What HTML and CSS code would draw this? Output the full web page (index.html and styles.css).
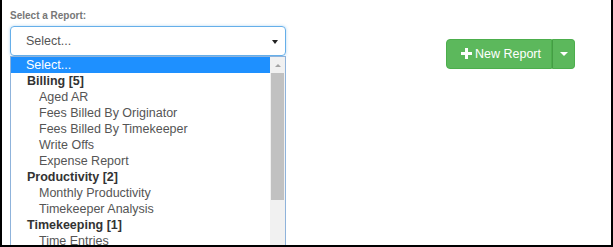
FILE: index.html
```html
<!DOCTYPE html>
<html lang="en">
<head>
    <meta charset="UTF-8">
    <title>Reports</title>
    <link rel="stylesheet" href="styles.css">
</head>
<body>
    <div class="page">
        <div class="form-group">
            <label class="label">Select a Report:</label>
            <div class="picker">
                <div class="select">Select...<span class="arrow"></span></div>
                <div class="list">
                    <div class="options">
                        <div class="opt selected">Select...</div>
                        <div class="group">Billing [5]</div>
                        <div class="opt item">Aged AR</div>
                        <div class="opt item">Fees Billed By Originator</div>
                        <div class="opt item">Fees Billed By Timekeeper</div>
                        <div class="opt item">Write Offs</div>
                        <div class="opt item">Expense Report</div>
                        <div class="group">Productivity [2]</div>
                        <div class="opt item">Monthly Productivity</div>
                        <div class="opt item">Timekeeper Analysis</div>
                        <div class="group">Timekeeping [1]</div>
                        <div class="opt item">Time Entries</div>
                    </div>
                    <div class="scrollbar">
                        <div class="up"><span></span></div>
                        <div class="thumb"></div>
                    </div>
                </div>
            </div>
        </div>
        <div class="btn-group">
            <div class="btn main">
                <svg width="11" height="11" viewBox="0 0 11 11"><rect x="4" y="0" width="3" height="11" fill="#fff"/><rect x="0" y="4" width="11" height="3" fill="#fff"/></svg>
                New Report
            </div>
            <div class="btn toggle"><span class="caret"></span></div>
        </div>
    </div>
</body>
</html>
```

FILE: styles.css
```css
body{
    margin: 0px;
    padding: 0px;
    background-color: #fff;
    font-family: "Liberation Sans", Arial, sans-serif;
}
.page{
    width: 613px;
    height: 247px;
    box-sizing: border-box;
    border-left: solid 2px #000;
    border-right: solid 2px #000;
    border-bottom: solid 2px #000;
    padding: 9px 0px 0px 8px;
    display: flex;
    align-items: flex-start;
    overflow: hidden;
}
.form-group{
    width: 276px;
    display: flex;
    flex-direction: column;
}
.label{
    font-size: 10px;
    font-weight: bold;
    line-height: 14px;
    color: #777;
    margin-bottom: 3px;
}
.picker{
    position: relative;
}
.select{
    height: 30px;
    box-sizing: border-box;
    border: solid 1px #66afe9;
    border-radius: 4px;
    box-shadow: 0 0 3px rgba(102, 175, 233, 0.5);
    padding: 0px 15px;
    font-size: 12.5px;
    line-height: 29px;
    color: #555;
    position: relative;
}
.arrow{
    position: absolute;
    right: 7px;
    top: 13px;
    border-left: solid 3px transparent;
    border-right: solid 3px transparent;
    border-top: solid 4px #222;
}
.list{
    position: absolute;
    top: 30px;
    left: 0px;
    width: 276px;
    height: 200px;
    box-sizing: border-box;
    border: solid 1px #8fb3db;
    border-bottom: none;
    background-color: #fff;
    display: flex;
}
.options{
    flex: 1;
}
.opt, .group{
    height: 16px;
    line-height: 16px;
    font-size: 12.5px;
    white-space: nowrap;
}
.selected{
    background-color: #1e90ff;
    color: #fff;
    padding-left: 15px;
}
.group{
    font-weight: bold;
    color: #333;
    padding-left: 16px;
}
.item{
    color: #555;
    padding-left: 28px;
}
.scrollbar{
    width: 15px;
    background-color: #f1f1f1;
}
.up{
    height: 16px;
    display: flex;
    align-items: center;
    justify-content: center;
}
.up span{
    border-left: solid 3px transparent;
    border-right: solid 3px transparent;
    border-bottom: solid 3px #a3a3a3;
}
.thumb{
    margin: 0px 1px;
    height: 127px;
    background-color: #c1c1c1;
}
.btn-group{
    margin-left: 160px;
    margin-top: 30px;
    display: flex;
    height: 30px;
}
.btn{
    background-color: #5cb85c;
    border: solid 1px #4cae4c;
    color: #fff;
    font-size: 12.5px;
    line-height: 28px;
    box-sizing: border-box;
    display: flex;
    align-items: center;
    cursor: pointer;
}
.main{
    width: 106px;
    padding-left: 14px;
    border-radius: 4px 0px 0px 4px;
    gap: 3px;
}
.main svg{
    margin-top: -1px;
}
.toggle{
    width: 23px;
    border-left: solid 1px #449d44;
    border-radius: 0px 4px 4px 0px;
    justify-content: center;
}
.caret{
    border-left: solid 4px transparent;
    border-right: solid 4px transparent;
    border-top: solid 4px #fff;
    margin-left: 1px;
}
```
